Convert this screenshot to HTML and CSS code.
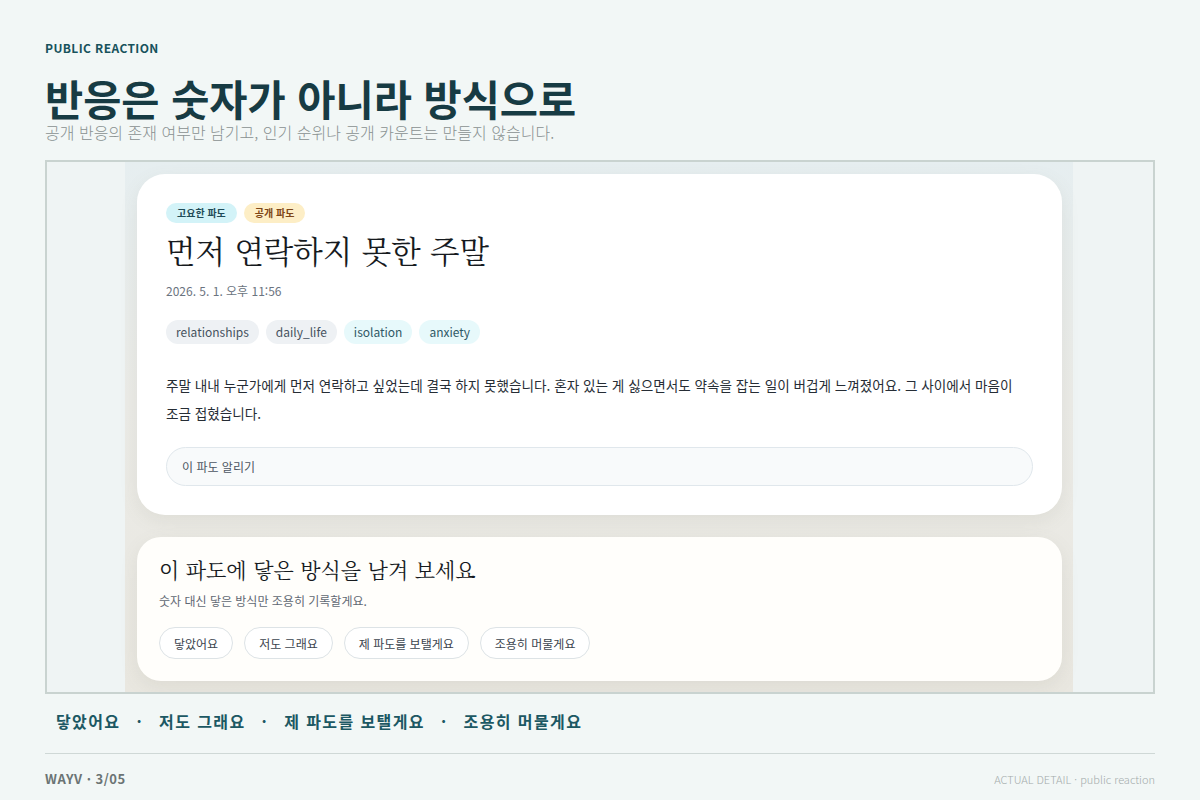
FILE: index.html
```html
<!DOCTYPE html>
<html lang="ko">
<head>
    <meta charset="UTF-8">
    <meta name="viewport" content="width=device-width, initial-scale=1.0">
    <title>Public Reaction</title>
<link rel="stylesheet" href="styles.css">
</head>
<body>
    <div class="slide">
        <div class="eyebrow">PUBLIC REACTION</div>
        <h1 class="slide-title">반응은 숫자가 아니라 방식으로</h1>
        <p class="slide-sub">공개 반응의 존재 여부만 남기고, 인기 순위나 공개 카운트는 만들지 않습니다.</p>

        <div class="shot">
            <div class="shot-column">
                <div class="wave-card">
                    <div class="badges">
                        <span class="badge badge-calm">고요한 파도</span>
                        <span class="badge badge-public">공개 파도</span>
                    </div>
                    <h2 class="wave-title">먼저 연락하지 못한 주말</h2>
                    <div class="wave-date">2026. 5. 1. 오후 11:56</div>
                    <div class="tags">
                        <span class="tag">relationships</span>
                        <span class="tag">daily_life</span>
                        <span class="tag tag-mint">isolation</span>
                        <span class="tag tag-mint">anxiety</span>
                    </div>
                    <p class="wave-body">주말 내내 누군가에게 먼저 연락하고 싶었는데 결국 하지 못했습니다. 혼자 있는 게 싫으면서도 약속을 잡는 일이 버겁게 느껴졌어요. 그 사이에서 마음이 조금 접혔습니다.</p>
                    <div class="report-box">이 파도 알리기</div>
                </div>

                <div class="reaction-card">
                    <h3 class="reaction-title">이 파도에 닿은 방식을 남겨 보세요</h3>
                    <p class="reaction-sub">숫자 대신 닿은 방식만 조용히 기록할게요.</p>
                    <div class="reaction-buttons">
                        <button class="reaction-btn">닿았어요</button>
                        <button class="reaction-btn">저도 그래요</button>
                        <button class="reaction-btn">제 파도를 보탤게요</button>
                        <button class="reaction-btn">조용히 머물게요</button>
                    </div>
                </div>
            </div>
        </div>

        <div class="reaction-list">
            <span>닿았어요</span>
            <span class="dot">·</span>
            <span>저도 그래요</span>
            <span class="dot">·</span>
            <span>제 파도를 보탤게요</span>
            <span class="dot">·</span>
            <span>조용히 머물게요</span>
        </div>

        <div class="footer">
            <div class="footer-left">WAYV · 3/05</div>
            <div class="footer-right">ACTUAL DETAIL · public reaction</div>
        </div>
    </div>
</body>
</html>
```

FILE: styles.css
```css
* {
    margin: 0;
    padding: 0;
    box-sizing: border-box;
}
body {
    background-color: #f2f7f6;
    font-family: "Noto Sans CJK KR", "Noto Sans", sans-serif;
    color: #1f2a30;
}
.slide {
    width: 1200px;
    height: 800px;
    padding: 40px 45px 0;
    overflow: hidden;
}
.eyebrow {
    font-size: 12px;
    line-height: 16px;
    font-weight: 700;
    letter-spacing: 0.4px;
    color: #17525c;
}
.slide-title {
    margin-top: 21px;
    font-size: 41.5px;
    line-height: 42px;
    font-weight: 700;
    color: #173b43;
}
.slide-sub {
    margin-top: 3px;
    font-size: 16px;
    line-height: 20px;
    font-weight: 300;
    color: #899191;
}

/* captured page inside the frame */
.shot {
    margin-top: 18px;
    height: 534px;
    border: 2px solid #c9d3d0;
    background-color: #eff4f4;
    overflow: hidden;
}
.shot-column {
    margin: 0 80px 0 78px;
    height: 100%;
    padding: 12px 11px 0 12px;
    background: linear-gradient(180deg, #e6eef0 0%, #ebebe7 45%, #e9e7e0 100%);
}
.wave-card {
    background-color: #ffffff;
    border-radius: 28px;
    padding: 29px;
    box-shadow: 0 6px 18px rgba(120, 120, 100, 0.10);
}
.badges {
    display: flex;
    gap: 7px;
}
.badge {
    height: 20px;
    line-height: 20px;
    padding: 0 11px;
    border-radius: 10px;
    font-size: 10px;
    font-weight: 700;
}
.badge-calm {
    background-color: #d3f3f8;
    color: #1f4b57;
}
.badge-public {
    background-color: #fdeec6;
    color: #7e4617;
}
.wave-title {
    margin-top: 7px;
    font-family: "Noto Serif CJK KR", "Nanum Myeongjo", "UnBatang", serif;
    font-size: 30.5px;
    line-height: 40px;
    font-weight: 400;
    color: #161a1e;
}
.wave-date {
    margin-top: 12px;
    font-size: 12px;
    line-height: 18px;
    color: #6b7480;
}
.tags {
    margin-top: 20px;
    display: flex;
    gap: 7px;
}
.tag {
    height: 24px;
    line-height: 24px;
    padding: 0 10px;
    border-radius: 12px;
    font-size: 12px;
    color: #46515e;
    background-color: #eef1f4;
}
.tag-mint {
    background-color: #e7f9fb;
    color: #2f5866;
}
.wave-body {
    margin-top: 27px;
    font-size: 13.6px;
    line-height: 28px;
    color: #262d35;
    word-break: keep-all;
}
.report-box {
    margin-top: 20px;
    height: 39px;
    line-height: 37px;
    padding: 0 15px;
    border: 1px solid #e0e7ec;
    border-radius: 20px;
    background-color: #f8fafb;
    font-size: 12px;
    color: #4c5663;
}
.reaction-card {
    margin-top: 22px;
    background-color: #fffefb;
    border-radius: 24px;
    padding: 17px 22px 22px;
    box-shadow: 0 6px 18px rgba(120, 120, 100, 0.10);
}
.reaction-title {
    font-family: "Noto Serif CJK KR", "Nanum Myeongjo", "UnBatang", serif;
    font-size: 21px;
    line-height: 30px;
    font-weight: 400;
    color: #161a1e;
}
.reaction-sub {
    margin-top: 9px;
    font-size: 12px;
    line-height: 16px;
    color: #5f6873;
}
.reaction-buttons {
    margin-top: 18px;
    display: flex;
    gap: 11px;
}
.reaction-btn {
    height: 32px;
    padding: 0 14px;
    border: 1px solid #dde3e6;
    border-radius: 16px;
    background-color: #ffffff;
    font-family: "Noto Sans CJK KR", "Noto Sans", sans-serif;
    font-size: 12px;
    color: #3b444e;
}

/* reaction words under the frame */
.reaction-list {
    margin-top: 15px;
    padding-left: 11px;
    display: flex;
    align-items: center;
    font-size: 16px;
    line-height: 24px;
    font-weight: 700;
    letter-spacing: 1.4px;
    color: #1c5863;
}
.dot {
    margin: 0 16px;
}
.footer {
    margin-top: 20px;
    border-top: 1px solid #cfd8d6;
    padding-top: 17px;
    display: flex;
    justify-content: space-between;
    align-items: center;
}
.footer-left {
    font-size: 13px;
    line-height: 16px;
    font-weight: 700;
    letter-spacing: 0.5px;
    color: #6b7474;
}
.footer-right {
    font-size: 11px;
    line-height: 16px;
    font-weight: 300;
    color: #a3abab;
}
```
